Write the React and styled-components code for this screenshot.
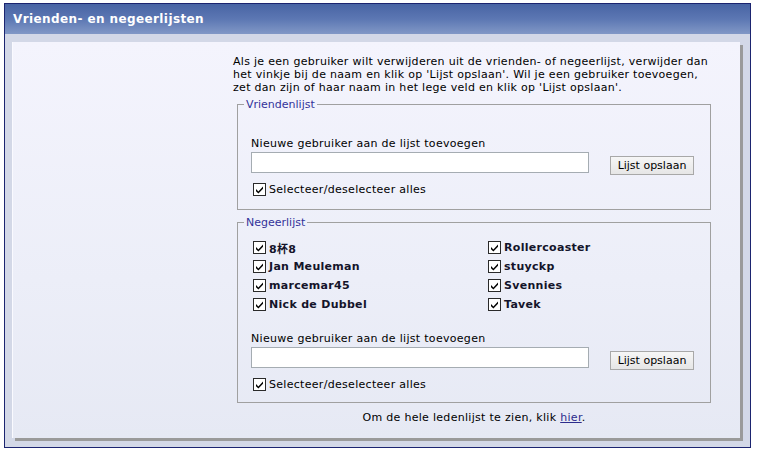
import React from 'react'
import styled, { createGlobalStyle } from 'styled-components'

const GlobalStyle = createGlobalStyle`
  html, body {
    margin: 0;
    padding: 0;
    background: #ffffff;
  }
  body {
    font-family: "DejaVu Sans", Verdana, "Noto Sans CJK SC", sans-serif;
    font-size: 11px;
    letter-spacing: 0.3px;
    color: #000;
  }
`

const Page = styled.div`
  padding: 3px 0 0 4px;
`

const Frame = styled.div`
  width: 745px;
  border: 1px solid #1b2470;
  background: #d3d8e7;
`

const Header = styled.div`
  height: 30px;
  display: flex;
  align-items: center;
  padding-left: 8px;
  background: linear-gradient(to bottom, #4864a4 0%, #5c77b3 50%, #8198c6 100%);
  color: #fff;
  font-weight: bold;
  font-size: 12px;
  letter-spacing: 0.4px;
`

const Body = styled.div`
  padding: 8px 10px 9px 7px;
`

const Panel = styled.div`
  height: 396px;
  box-sizing: border-box;
  display: flex;
  border-left: 1px solid #fafaff;
  background: linear-gradient(to bottom, #f4f4fd 0%, #eceef8 60%, #e6e9f4 100%);
  box-shadow: 3px 3px 0 #9a9a9a;
`

const SideColumn = styled.div`
  width: 220px;
  flex-shrink: 0;
`

const Content = styled.div`
  width: 482px;
  padding-top: 13px;
`

const Intro = styled.p`
  margin: 0 0 4px;
  line-height: 13px;
  white-space: nowrap;
`

const Fieldset = styled.fieldset`
  margin: ${p => (p.$first ? '0' : '6px')} 0 0 4px;
  padding: 0 0 ${p => p.$bottom}px 13px;
  width: 459px;
  border: 1px solid #a0a0a0;
  box-sizing: content-box;
`

const Legend = styled.legend`
  margin-left: -7px;
  padding: 0 2px;
  line-height: 13px;
  color: #33339a;
  letter-spacing: 0;
`

const Label = styled.div`
  line-height: 13px;
  margin-top: ${p => p.$top}px;
`

const InputRow = styled.div`
  display: flex;
  align-items: flex-start;
  margin-top: 2px;
`

const TextInput = styled.input`
  width: 338px;
  height: 21px;
  box-sizing: border-box;
  border: 1px solid #a5acb2;
  background: #fff;
  margin: 0;
  padding: 0 3px;
  font: inherit;
`

const Button = styled.button`
  margin: 4px 0 0 21px;
  height: 19px;
  width: 84px;
  padding: 0;
  box-sizing: border-box;
  border: 1px solid #a8a8a8;
  background: linear-gradient(to bottom, #f6f6f6, #e6e6e6);
  font: inherit;
  color: #000;
`

const CheckRow = styled.label`
  display: flex;
  align-items: center;
  height: ${p => p.$h || 14}px;
  margin-left: 2px;
  margin-top: ${p => p.$top || 0}px;
  font-weight: ${p => (p.$bold ? 'bold' : 'normal')};
  color: ${p => (p.$bold ? '#14142a' : '#000')};
`

const Box = styled.span`
  width: 11px;
  height: 11px;
  border: 1px solid #2a2a2a;
  background: #fff;
  margin-right: 3px;
  display: flex;
  align-items: center;
  justify-content: center;
  flex-shrink: 0;
`

const NameGrid = styled.div`
  display: grid;
  grid-template-columns: 235px 224px;
  grid-auto-flow: column;
  grid-template-rows: repeat(4, 19px);
  margin-top: 9px;
`

const Footer = styled.div`
  margin-top: 8px;
  margin-left: 4px;
  width: 474px;
  text-align: center;
  line-height: 13px;
  a {
    color: #2c2c8c;
    text-decoration: underline;
  }
`

const Check = ({ children, bold, h, top }) => (
  <CheckRow $bold={bold} $h={h} $top={top}>
    <Box>
      <svg width="9" height="9" viewBox="0 0 9 9">
        <path d="M1 4 L3.4 6.4 L8 1.6 L8 3.8 L3.4 8.6 L1 6.2 Z" fill="#000" />
      </svg>
    </Box>
    {children}
  </CheckRow>
)

const AddUser = ({ labelTop }) => (
  <>
    <Label $top={labelTop}>Nieuwe gebruiker aan de lijst toevoegen</Label>
    <InputRow>
      <TextInput type="text" />
      <Button>Lijst opslaan</Button>
    </InputRow>
    <Check top={7}>Selecteer/deselecteer alles</Check>
  </>
)

const ignored = [
  '8杯8',
  'Jan Meuleman',
  'marcemar45',
  'Nick de Dubbel',
  'Rollercoaster',
  'stuyckp',
  'Svennies',
  'Tavek',
]

export default function App() {
  return (
    <>
      <GlobalStyle />
      <Page>
        <Frame>
          <Header>Vrienden- en negeerlijsten</Header>
          <Body>
            <Panel>
              <SideColumn />
              <Content>
                <Intro>
                  Als je een gebruiker wilt verwijderen uit de vrienden- of negeerlijst, verwijder dan
                  <br />
                  het vinkje bij de naam en klik op 'Lijst opslaan'. Wil je een gebruiker toevoegen,
                  <br />
                  zet dan zijn of haar naam in het lege veld en klik op 'Lijst opslaan'.
                </Intro>
                <Fieldset $first $bottom={13}>
                  <Legend>Vriendenlijst</Legend>
                  <AddUser labelTop={26} />
                </Fieldset>
                <Fieldset $bottom={11}>
                  <Legend>Negeerlijst</Legend>
                  <NameGrid>
                    {ignored.map(name => (
                      <Check key={name} bold h={19}>
                        {name}
                      </Check>
                    ))}
                  </NameGrid>
                  <AddUser labelTop={18} />
                </Fieldset>
                <Footer>
                  Om de hele ledenlijst te zien, klik <a href="#">hier</a>.
                </Footer>
              </Content>
            </Panel>
          </Body>
        </Frame>
      </Page>
    </>
  )
}
